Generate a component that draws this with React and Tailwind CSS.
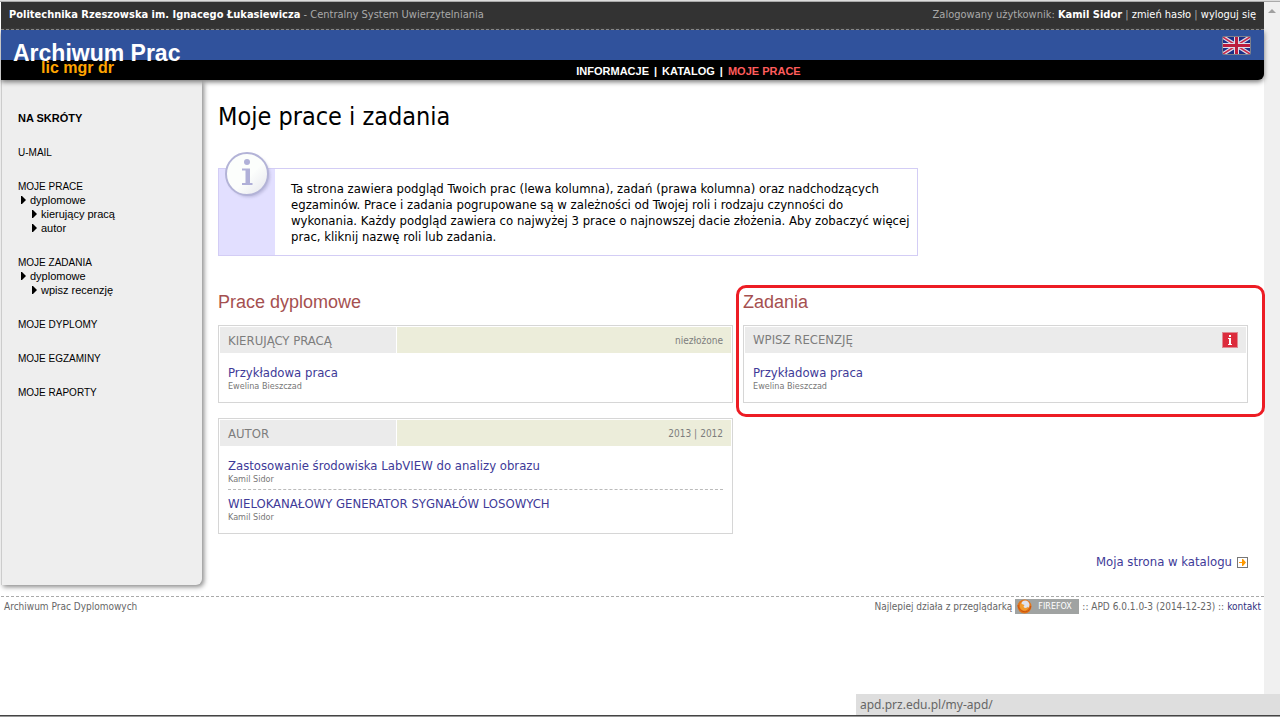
const shortcuts = [
  { label: 'U-MAIL', items: [] },
  {
    label: 'MOJE PRACE',
    items: [
      { label: 'dyplomowe', level: 1 },
      { label: 'kierujący pracą', level: 2 },
      { label: 'autor', level: 2 },
    ],
  },
  {
    label: 'MOJE ZADANIA',
    items: [
      { label: 'dyplomowe', level: 1 },
      { label: 'wpisz recenzję', level: 2 },
    ],
  },
  { label: 'MOJE DYPLOMY', items: [] },
  { label: 'MOJE EGZAMINY', items: [] },
  { label: 'MOJE RAPORTY', items: [] },
];

function Bullet() {
  return (
    <svg className="h-2 w-[5px] shrink-0" viewBox="0 0 5 8" aria-hidden="true">
      <path d="M0 0h1l4 4-4 4H0z" fill="#000" />
    </svg>
  );
}

function BritishFlag() {
  return (
    <svg className="h-[19px] w-[29px]" viewBox="0 0 29 19" aria-hidden="true">
      <defs>
        <clipPath id="flag">
          <rect x="1" y="1" width="27" height="17" />
        </clipPath>
      </defs>
      <rect width="29" height="19" rx="2" fill="#7d7f8c" />
      <g clipPath="url(#flag)">
        <rect x="1" y="1" width="27" height="17" fill="#1b2f87" />
        <path d="M1 1l27 17M28 1L1 18" stroke="#dcdcea" strokeWidth="4" />
        <path d="M1 1l27 17M28 1L1 18" stroke="#c8294a" strokeWidth="1.500" />
        <path d="M14.500 1v17M1 9.500h27" stroke="#dcdcea" strokeWidth="5" />
        <path d="M14.500 1v17M1 9.500h27" stroke="#bb1c3d" strokeWidth="3" />
      </g>
    </svg>
  );
}

function InfoBadge() {
  return (
    <svg className="h-12 w-[50px]" viewBox="0 0 50 48" aria-hidden="true">
      <defs>
        <linearGradient id="badge" x1="0" y1="0" x2="1" y2="1">
          <stop offset="0.55" stopColor="#fcfefc" />
          <stop offset="1" stopColor="#e4e4ec" />
        </linearGradient>
        <filter id="badgeShadow" x="-20%" y="-20%" width="150%" height="150%">
          <feGaussianBlur stdDeviation="1.5" />
        </filter>
      </defs>
      <circle cx="24" cy="24" r="21" fill="#8c8cb4" opacity="0.45" filter="url(#badgeShadow)" />
      <circle cx="22" cy="22" r="21" fill="url(#badge)" stroke="#b3b3d7" strokeWidth="2" />
      <circle cx="22" cy="10" r="3" fill="#b0b0d8" />
      <path d="M17 16.500h8V31h2.500v2H17v-2h3.500V18.500H17z" fill="#b0b0d8" />
    </svg>
  );
}

function AlertIcon() {
  return (
    <svg className="h-4 w-4" viewBox="0 0 16 16" role="img" aria-label="Informacja">
      <rect width="16" height="16" fill="#e08a92" />
      <rect x="1" y="1" width="14" height="14" fill="#dc2b3c" />
      <path d="M7 3h2v2H7zM6 6h3v6h1v1H6v-1h1V7H6z" fill="#fff" />
    </svg>
  );
}

function ArrowIcon() {
  return (
    <svg className="h-[11px] w-[11px]" viewBox="0 0 11 11" aria-hidden="true">
      <rect x="0.5" y="0.5" width="10" height="10" fill="#fff" stroke="#777" />
      <path d="M2 5h3V2h1l3 3.500L6 9H5V6H2z" fill="#ff9900" />
    </svg>
  );
}

function FirefoxBadge() {
  return (
    <span className="flex h-[15px] w-16 items-center gap-[6px] bg-[#a0a3a2] pl-[2px]">
      <svg className="h-[15px] w-[15px]" viewBox="0 0 15 15" aria-hidden="true">
        <circle cx="7.500" cy="7.500" r="7" fill="#e2761b" />
        <circle cx="8.200" cy="5.800" r="4.300" fill="#dfe3ee" />
        <path d="M5 2.500c-1 1-1 2 .5 2.800l2 .7-1 1.800c1 1.700 3.500 1.500 4.500-.3.500 3-2 4.500-4 4.200C4.500 11.400 2.700 9 3 6.500 3 5 4 3 5 2.500z" fill="#f29c2e" />
        <path d="M1 6C1.500 10.500 5 13 8.500 12.700c3-.3 5-2.700 5.200-5.700" fill="none" stroke="#c9520f" strokeWidth="1" />
      </svg>
      <span className="font-['DejaVu_Sans'] text-[8px] leading-none text-white">FIREFOX</span>
    </span>
  );
}

function Thesis({ title, author }) {
  return (
    <li className="pt-[6px] pb-1">
      <a href="#praca" className="block leading-4 text-[#403a98]">{title}</a>
      <span className="block text-[9px] leading-[11px] text-[#777]">{author}</span>
    </li>
  );
}

function Panel({ title, links, children }) {
  return (
    <section className="border border-[#d6d6d6] bg-white">
      <div className="flex h-[27px] gap-px p-px pb-0 leading-7 text-[#7d7d7d]">
        <h3 className={links ? 'w-44 bg-[#ebebeb] px-2' : 'flex flex-1 items-center justify-between bg-[#ebebeb] px-2'}>
          {title}
          {!links && <AlertIcon />}
        </h3>
        {links && (
          <div className="flex flex-1 justify-end bg-[#ecedda] px-2 text-[10px]">
            {links.map((link, i) => (
              <span key={link}>
                {i > 0 && <span className="px-[3px]">|</span>}
                <a href="#lista">{link}</a>
              </span>
            ))}
          </div>
        )}
      </div>
      <ul className="mx-[9px] divide-y divide-dashed divide-[#bbb] py-[6px]">{children}</ul>
    </section>
  );
}

function TopBar() {
  return (
    <div className="flex h-[28px] items-center justify-between border-b border-dashed border-[#888] bg-[#333] px-2 text-[11px] text-[#aaa]">
      <p>
        <a href="#uczelnia" className="font-bold text-white">Politechnika Rzeszowska im. Ignacego Łukasiewicza</a>
        {' - Centralny System Uwierzytelniania'}
      </p>
      <p>
        Zalogowany użytkownik: <b className="text-white">Kamil Sidor</b>
        {' | '}
        <a href="#haslo" className="text-white">zmień hasło</a>
        {' | '}
        <a href="#wyloguj" className="text-white">wyloguj się</a>
      </p>
    </div>
  );
}

function Header() {
  return (
    <header className="relative z-10 rounded-br-md bg-black font-['Liberation_Sans',sans-serif] font-bold shadow-[0_2px_5px_#777]">
      <div className="flex h-[30px] items-center justify-between bg-[#30529c] pr-[13px] pl-3">
        <a href="#apd" className="relative pt-4 text-[23px] leading-8 text-white">
          Archiwum Prac
          <span className="absolute top-[39px] left-7 text-base leading-4 text-[#ffa500]">lic mgr dr</span>
        </a>
        <a href="#en" aria-label="English">
          <BritishFlag />
        </a>
      </div>
      <nav className="flex h-5 items-center justify-center gap-[5px] pt-[2px] pl-28 text-[11px] text-white">
        <a href="#informacje">INFORMACJE</a>
        <span>|</span>
        <a href="#katalog">KATALOG</a>
        <span>|</span>
        <a href="#prace" className="text-[#ff5c5c]">MOJE PRACE</a>
      </nav>
    </header>
  );
}

function Sidebar() {
  return (
    <aside className="h-[505px] w-[201px] shrink-0 rounded-br-md border-l border-[#ccc] bg-[#eee] px-4 pt-[31px] font-['Liberation_Sans',sans-serif] text-[11px] leading-[14px] text-black shadow-[2px_2px_5px_#888]">
      <h2 className="font-bold">NA SKRÓTY</h2>
      <ul className="mt-5 space-y-5">
        {shortcuts.map((group) => (
          <li key={group.label}>
            <a href="#skrot" className="block pt-[2px] text-[10px] leading-3">{group.label}</a>
            {group.items.map((item) => (
              <a
                key={item.label}
                href="#skrot"
                className={item.level === 1 ? 'flex items-center gap-1 pl-[3px]' : 'flex items-center gap-1 pl-[14px]'}
              >
                <Bullet />
                {item.label}
              </a>
            ))}
          </li>
        ))}
      </ul>
    </aside>
  );
}

export default function App() {
  return (
    <div className="flex h-screen flex-col bg-white font-['DejaVu_Sans_Condensed','DejaVu_Sans',sans-serif] text-[13px] text-black">
      <div className="h-[2px] shrink-0 border-b border-[#aaa] bg-[#ddd]" />
      <div className="flex flex-1">
        <div className="flex-1 pl-px">
          <TopBar />
          <Header />
          <div className="flex">
            <Sidebar />
            <main className="flex-1 px-4 pt-[21px]">
              <h1 className="text-[25px] leading-8">Moje prace i zadania</h1>

              {/* Info box with the badge hanging over its top edge */}
              <div className="relative mt-[35px] flex w-[700px] border border-[#d3cdf5]">
                <div className="w-14 shrink-0 bg-[#e2dfff]" />
                <span className="absolute -top-[17px] left-[6px]">
                  <InfoBadge />
                </span>
                <p className="pt-3 pb-[10px] pl-4 leading-4">
                  Ta strona zawiera podgląd Twoich prac (lewa kolumna), zadań (prawa kolumna) oraz nadchodzących
                  <br />
                  egzaminów. Prace i zadania pogrupowane są w zależności od Twojej roli i rodzaju czynności do
                  <br />
                  wykonania. Każdy podgląd zawiera co najwyżej 3 prace o najnowszej dacie złożenia. Aby zobaczyć więcej
                  <br />
                  prac, kliknij nazwę roli lub zadania.
                </p>
              </div>

              <div className="mt-9 grid grid-cols-[51fr_50fr] items-start gap-[10px]">
                <div>
                  <h2 className="mb-[13px] font-['Liberation_Sans',sans-serif] text-lg leading-5 text-[#a55050]">Prace dyplomowe</h2>
                  <div className="space-y-[15px]">
                    <Panel title="KIERUJĄCY PRACĄ" links={['niezłożone']}>
                      <Thesis title="Przykładowa praca" author="Ewelina Bieszczad" />
                    </Panel>
                    <Panel title="AUTOR" links={['2013', '2012']}>
                      <Thesis title="Zastosowanie środowiska LabVIEW do analizy obrazu" author="Kamil Sidor" />
                      <Thesis title="WIELOKANAŁOWY GENERATOR SYGNAŁÓW LOSOWYCH" author="Kamil Sidor" />
                    </Panel>
                  </div>
                </div>
                <div className="relative">
                  <div className="pointer-events-none absolute -top-[7px] -right-[17px] -bottom-[14px] -left-[7px] rounded-[10px] border-3 border-[#ed1c24]" />
                  <h2 className="mb-[13px] font-['Liberation_Sans',sans-serif] text-lg leading-5 text-[#a55050]">Zadania</h2>
                  <Panel title="WPISZ RECENZJĘ">
                    <Thesis title="Przykładowa praca" author="Ewelina Bieszczad" />
                  </Panel>
                </div>
              </div>

              <a href="#katalog" className="mt-5 flex items-center justify-end gap-[5px] leading-4 text-[#403a98]">
                Moja strona w katalogu
                <ArrowIcon />
              </a>
            </main>
          </div>

          <footer className="mt-[11px] flex items-center justify-between border-t border-dashed border-[#aaa] px-[3px] pt-[2px] text-[10px] text-[#666]">
            <span>Archiwum Prac Dyplomowych</span>
            <span className="flex items-center gap-[3px]">
              Najlepiej działa z przeglądarką
              <FirefoxBadge />
              :: APD 6.0.1.0-3 (2014-12-23) ::
              <a href="#kontakt" className="text-[#303080]">kontakt</a>
            </span>
          </footer>
        </div>

        {/* Scrollbar track */}
        <div className="flex w-4 shrink-0 justify-center bg-[#f0f0f0] pt-[7px]">
          <svg className="h-1 w-2" viewBox="0 0 8 4" aria-hidden="true">
            <path d="M4 0l4 4H0z" fill="#a0a0a0" />
          </svg>
        </div>
      </div>

      <div className="fixed right-0 bottom-1 w-[424px] bg-[#dedede] px-1 font-['Noto_Sans',sans-serif] text-xs leading-[21px] text-[#666]">
        apd.prz.edu.pl/my-apd/
      </div>
      <div className="mb-[2px] h-[2px] shrink-0 border-b border-[#999] bg-[#444]" />
    </div>
  );
}
